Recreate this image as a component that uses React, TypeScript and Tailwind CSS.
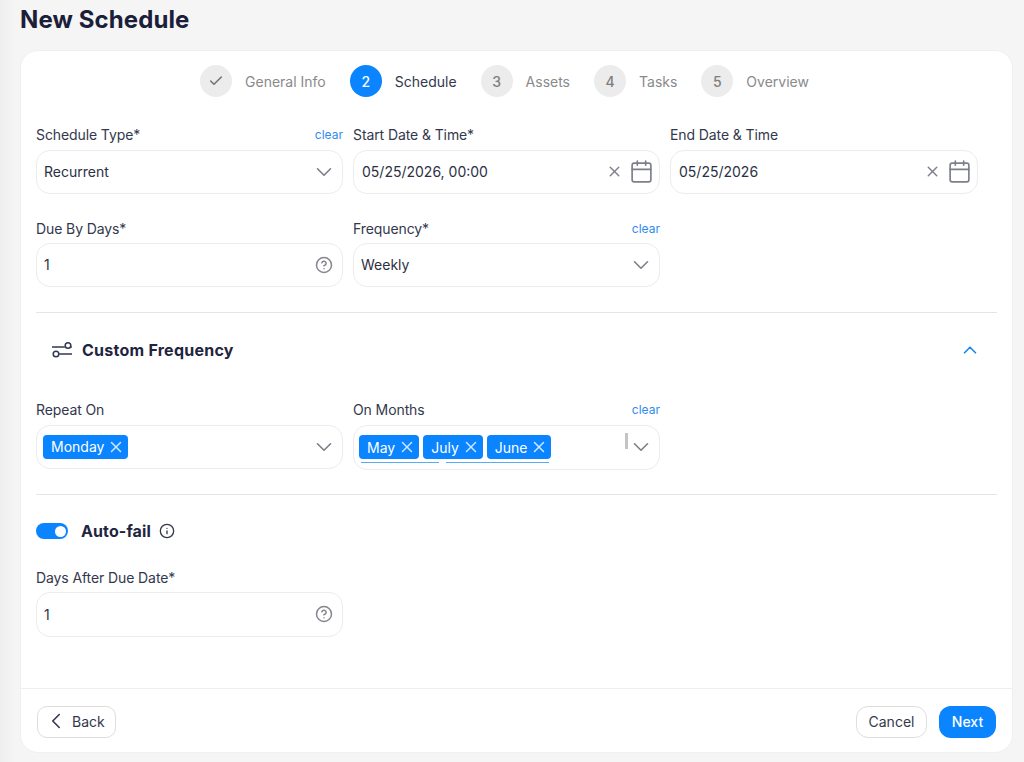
import { Calendar, Check, ChevronDown, ChevronLeft, ChevronUp, CircleHelp, Info, X } from "lucide-react";

const steps = [
  { mark: "done", label: "General Info", gap: "mr-6" },
  { mark: "2", label: "Schedule", active: true, gap: "mr-6" },
  { mark: "3", label: "Assets", gap: "mr-6" },
  { mark: "4", label: "Tasks", gap: "mr-6" },
  { mark: "5", label: "Overview", gap: "" },
];

function Label({ text, clear }: { text: string; clear?: boolean }) {
  return (
    <div className="flex h-[17px] items-center justify-between text-[14px] leading-[17px] tracking-[-0.1px] text-[#33384d]">
      <span>{text}</span>
      {clear && <span className="text-[12px] tracking-normal text-[#2f8cf0]">clear</span>}
    </div>
  );
}

function Chevron() {
  return <ChevronDown className="-mr-[3px] h-[26px] w-[26px] shrink-0 text-[#7d7f8a]" strokeWidth={1.5} />;
}

function Box({ children, className = "mt-[7px] h-11 pl-[7px] pr-[8px]" }: { children: React.ReactNode; className?: string }) {
  return (
    <div className={`flex items-center rounded-[14px] border border-[#ececee] bg-white pb-px text-[14px] text-[#2c3044] ${className}`}>
      {children}
    </div>
  );
}

function SelectField({ label, value, clear, boxClass }: { label: string; value: string; clear?: boolean; boxClass?: string }) {
  return (
    <div>
      <Label text={label} clear={clear} />
      <Box className={boxClass}>
        <span className="flex-1">{value}</span>
        <Chevron />
      </Box>
    </div>
  );
}

function DateField({ label, value }: { label: string; value: string }) {
  return (
    <div>
      <Label text={label} />
      <Box className="mt-[7px] h-11 pl-[8px] pr-[5px]">
        <span className="flex-1">{value}</span>
        <X className="mr-[6px] h-[17px] w-[17px] text-[#7d7f8a]" strokeWidth={2} />
        <Calendar className="h-[25px] w-[25px] text-[#7d7f8a]" strokeWidth={1.6} />
      </Box>
    </div>
  );
}

function NumberField({ label, value, boxClass }: { label: string; value: string; boxClass: string }) {
  return (
    <div>
      <Label text={label} />
      <Box className={boxClass}>
        <span className="flex-1">{value}</span>
        <CircleHelp className="mr-[1px] h-[18px] w-[18px] text-[#85858f]" strokeWidth={2} />
      </Box>
    </div>
  );
}

function Tag({ text }: { text: string }) {
  return (
    <span className="flex h-6 items-center gap-[3px] rounded-[4px] bg-[#0a84ff] pl-2 pr-[3px] text-[14px] text-white">
      {text}
      <X className="h-[18px] w-[18px] text-[#cfe6ff]" strokeWidth={2} />
    </span>
  );
}

export default function App() {
  return (
    <div className="h-[762px] w-[1024px] overflow-hidden bg-[linear-gradient(90deg,#eeeeee_0,#f5f5f5_14px)] pl-5 pr-[11px] font-['Inter','Noto_Sans',sans-serif]">
      <h1 className="flex h-[50px] items-start pt-[5px] text-[24px] font-bold leading-[30px] tracking-[0.1px] text-[#1a2039]">New Schedule</h1>

      <div className="flex h-[703px] flex-col rounded-[18px] border border-[#f0f0f0] bg-white">
        <div className="flex-1 px-[15px]">
          <div className="flex h-[66px] items-start justify-center pr-[24px] pt-[14px]">
            {steps.map((s) => (
              <div key={s.label} className={`flex items-center ${s.gap}`}>
                <span
                  className={`flex h-8 w-8 items-center justify-center rounded-full text-[14px] font-medium ${
                    s.active ? "bg-[#0a84ff] text-white" : "bg-[#ececec] text-[#7d7d7d]"
                  }`}
                >
                  {s.mark === "done" ? <Check className="h-4 w-4 text-[#707070]" strokeWidth={2.2} /> : s.mark}
                </span>
                <span className={`ml-[13px] text-[14px] ${s.active ? "text-[#33384d]" : "text-[#8a8a8a]"}`}>{s.label}</span>
              </div>
            ))}
          </div>

          <div className="grid grid-cols-[307px_307px_308px] gap-x-[10px] gap-y-[26px] pt-[9px]">
            <SelectField label="Schedule Type*" value="Recurrent" clear />
            <DateField label="Start Date & Time*" value="05/25/2026, 00:00" />
            <DateField label="End Date & Time" value="05/25/2026" />
            <NumberField label="Due By Days*" value="1" boxClass="mt-[6px] h-11 pl-[7px] pr-[8px]" />
            <SelectField label="Frequency*" value="Weekly" clear boxClass="mt-[6px] h-11 pl-[7px] pr-[8px]" />
          </div>

          <div className="mt-[25px] flex h-[75px] items-center border-t border-[#e5e5e7] pl-[15px] pr-4">
            <svg width="22" height="18" viewBox="0 0 22 18" fill="none" stroke="#33384d" strokeWidth="1.5" className="mr-[9px]">
              <path d="M1 6H13.8M20.2 6H21M8.2 13H21" />
              <circle cx="17" cy="4.5" r="2.8" />
              <circle cx="5" cy="13" r="2.8" />
            </svg>
            <span className="flex-1 text-[16px] font-bold tracking-[0.25px] text-[#1f2540]">Custom Frequency</span>
            <ChevronUp className="h-[22px] w-[22px] text-[#1a88e8]" strokeWidth={1.8} />
          </div>

          <div className="grid grid-cols-[307px_307px_308px] gap-x-[10px] pt-[14px]">
            <div>
              <Label text="Repeat On" />
              <Box className="mt-[7px] h-11 pl-[6px] pr-[8px]">
                <span className="flex flex-1 items-center">
                  <Tag text="Monday" />
                </span>
                <Chevron />
              </Box>
            </div>
            <div>
              <Label text="On Months" clear />
              <Box className="relative mt-[7px] h-[45px] pl-[5px] pr-[8px]">
                <span className="flex flex-1 items-center gap-1">
                  <Tag text="May" />
                  <Tag text="July" />
                  <Tag text="June" />
                </span>
                <span className="absolute left-[7px] top-[36px] h-px w-[78px] bg-[#5aa9f5]" />
                <span className="absolute left-[92px] top-[36px] h-px w-[103px] bg-[#5aa9f5]" />
                <span className="absolute right-[31px] top-[7px] h-4 w-[3px] bg-[#c4c4c4]" />
                <Chevron />
              </Box>
            </div>
          </div>

          <div className="mt-[24px] flex h-[74px] items-center border-t border-[#e5e5e7] pb-px">
            <span className="relative h-4 w-8 rounded-full bg-[#0a84ff]">
              <span className="absolute right-[2px] top-[2.5px] h-[11px] w-[11px] rounded-full bg-white" />
            </span>
            <span className="ml-[13px] text-[16px] font-bold tracking-[0.1px] text-[#1f2540]">Auto-fail</span>
            <Info className="ml-2 h-4 w-4 text-[#33384d]" strokeWidth={2} />
          </div>

          <div className="grid grid-cols-[307px_307px_308px] gap-x-[10px] pt-px">
            <NumberField label="Days After Due Date*" value="1" boxClass="mt-[6px] h-[45px] pl-[7px] pr-[8px]" />
          </div>
        </div>

        <div className="flex h-[64px] items-center border-t border-[#eeeeee] pl-4 pr-4 pt-[3px]">
          <button className="flex h-8 w-[79px] items-center justify-start rounded-[10px] border border-[#dedede] pb-[2px] pl-[5px] text-[14px] text-[#33384d]">
            <ChevronLeft className="mr-[3px] h-[26px] w-[26px]" strokeWidth={1.5} />
            Back
          </button>
          <button className="ml-auto h-8 w-[71px] rounded-[12px] border border-[#dedede] pb-[2px] text-[14px] text-[#33384d]">Cancel</button>
          <button className="ml-3 h-8 w-[57px] rounded-[12px] bg-[#0a84ff] pb-[2px] text-[14px] font-medium text-white">Next</button>
        </div>
      </div>
    </div>
  );
}
